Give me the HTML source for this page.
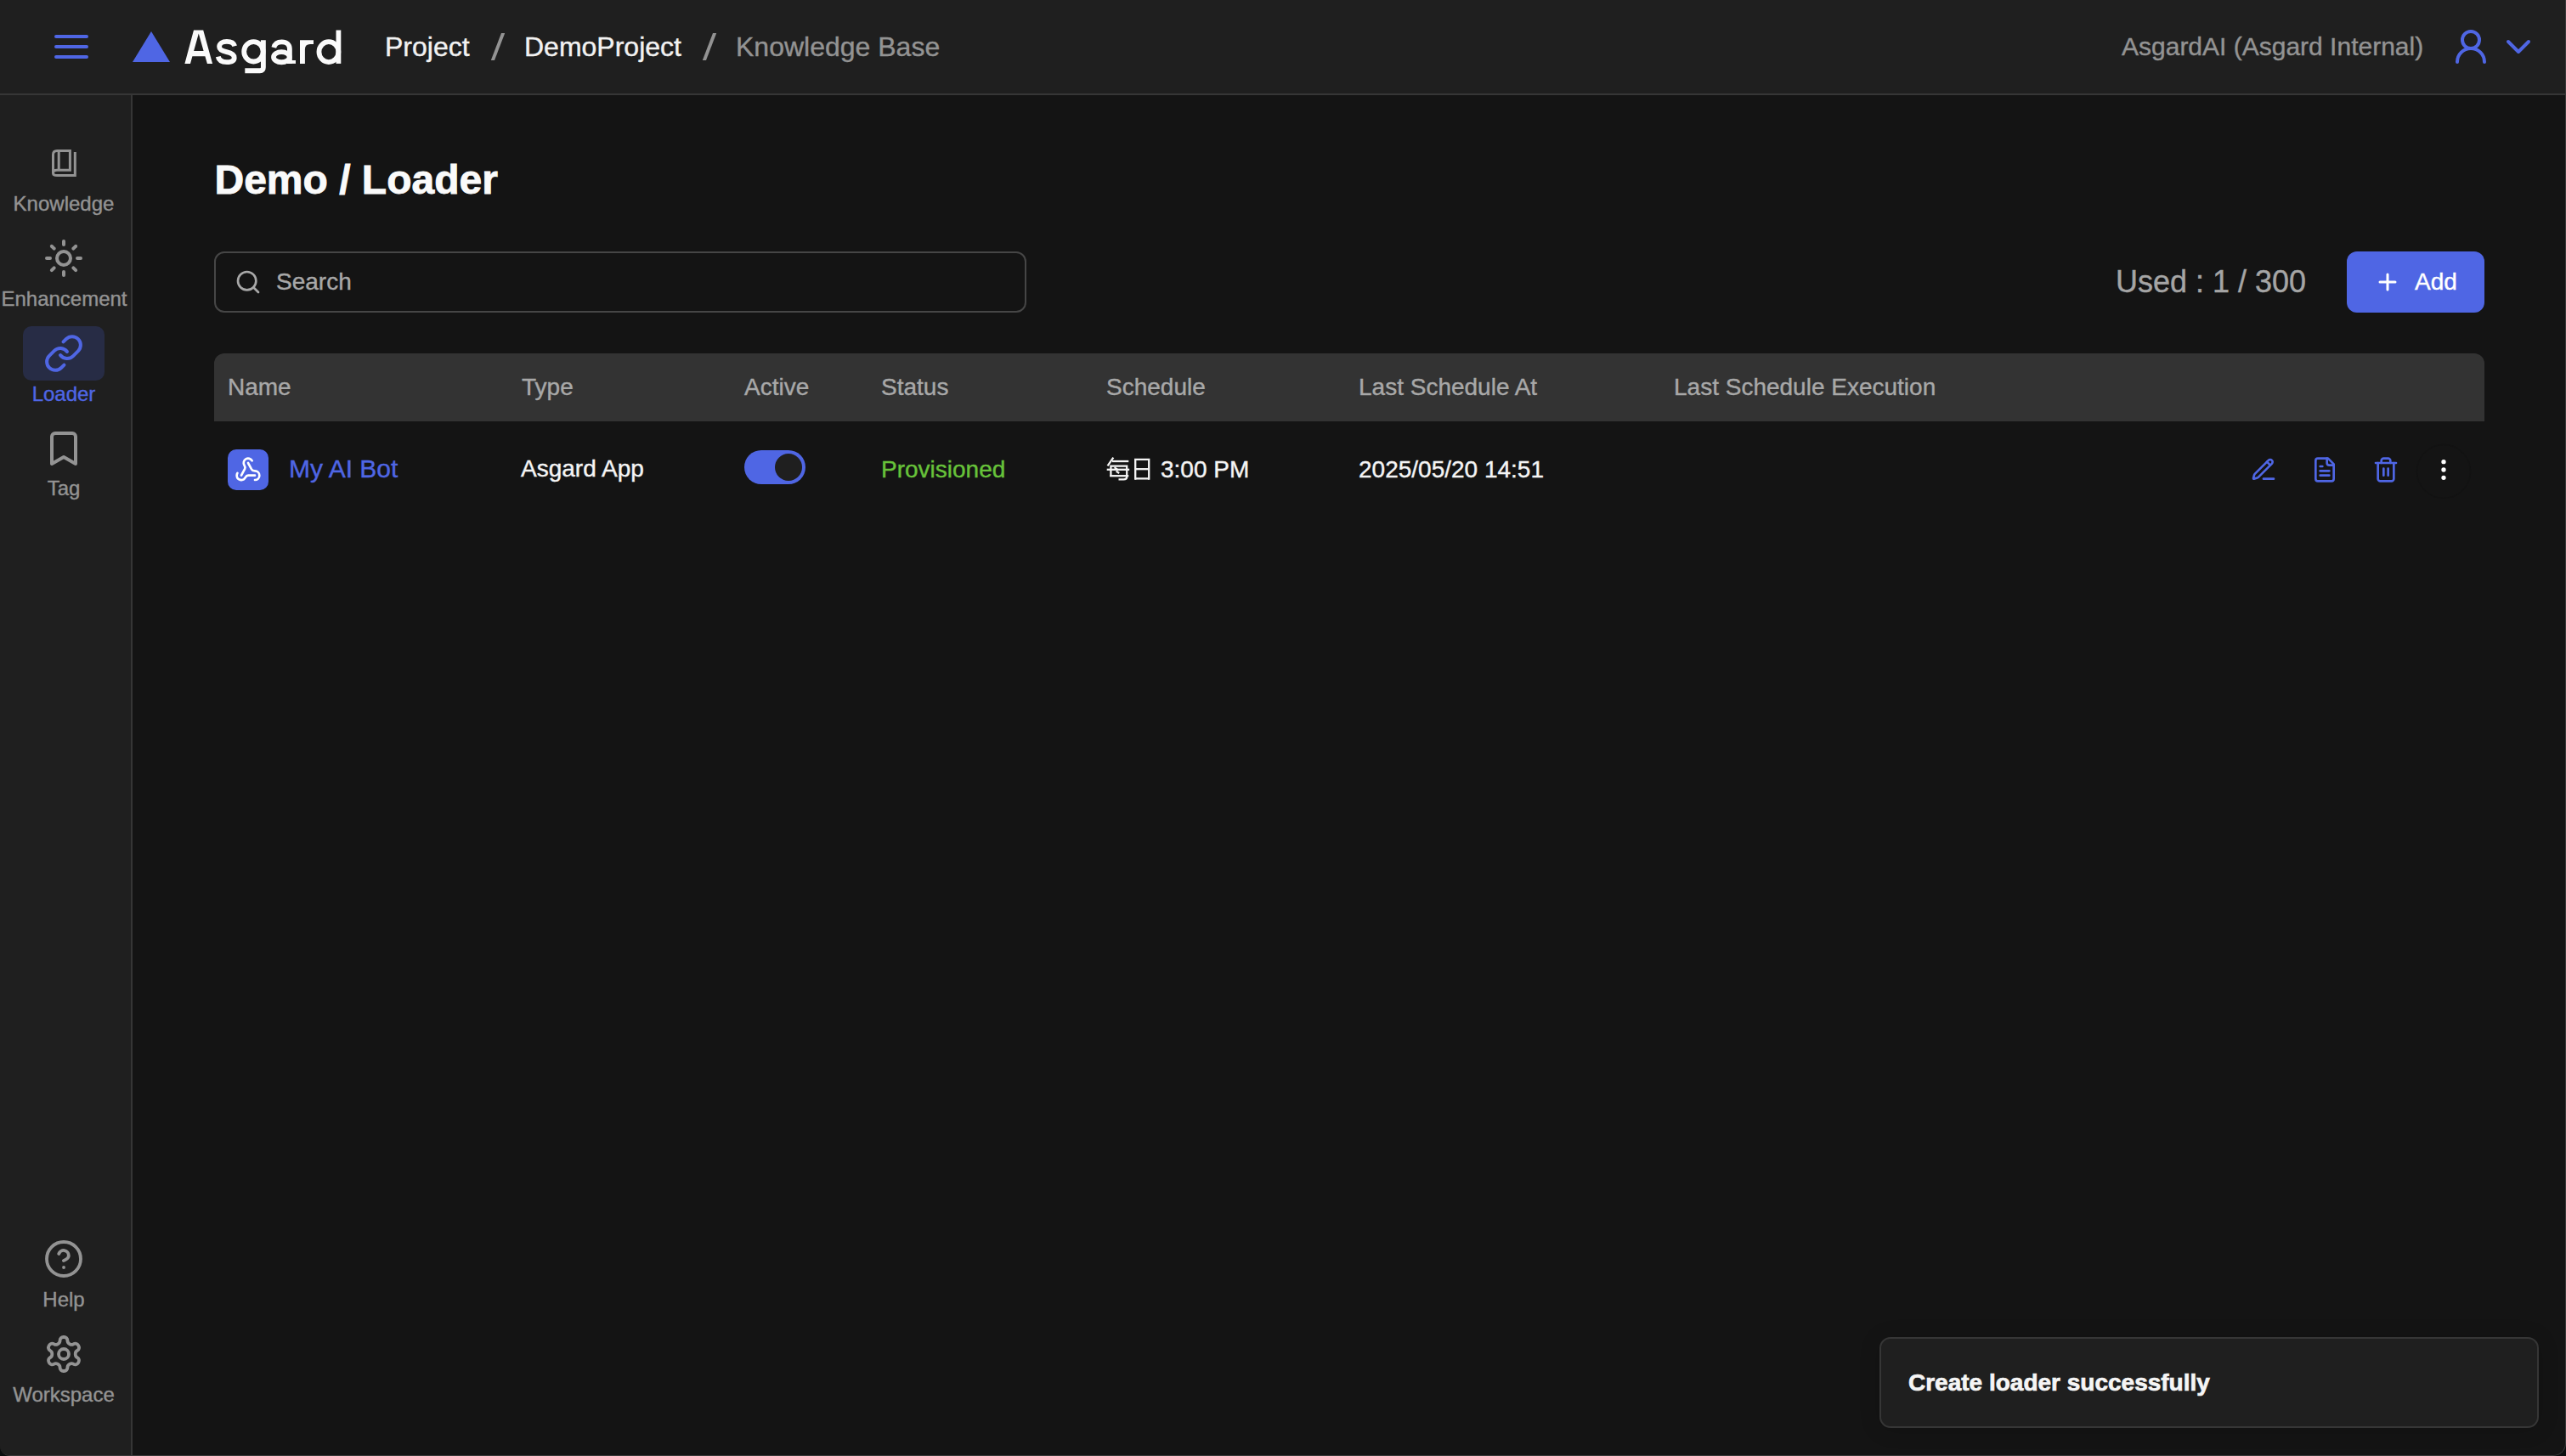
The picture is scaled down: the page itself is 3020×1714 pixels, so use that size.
<!DOCTYPE html>
<html>
<head>
<meta charset="utf-8">
<style>
html,body{margin:0;padding:0;width:3020px;height:1714px;overflow:hidden;background:#0b0e0f;}
body{font-family:"Liberation Sans",sans-serif;}
#win{position:absolute;left:0;top:0;width:3020px;height:1714px;box-sizing:border-box;background:#141414;overflow:hidden;border-right:1px solid #393939;border-bottom:1px solid #393939;border-bottom-right-radius:15px;border-bottom-left-radius:12px;}
.t{position:absolute;white-space:nowrap;-webkit-text-stroke:0.4px currentColor;}
#hdr{position:absolute;left:0;top:0;width:3019px;height:110px;background:#1f1f1f;border-bottom:2px solid #363636;}
#side{position:absolute;left:0;top:112px;width:154px;height:1602px;background:#1f1f1f;border-right:2px solid #363636;}
svg{position:absolute;overflow:visible;}
.ic{fill:none;stroke-linecap:round;stroke-linejoin:round;}
.grey{color:#939393;}
</style>
</head>
<body>
<div id="win">
  <div id="hdr">
    <!-- hamburger -->
    <svg style="left:0;top:0" width="200" height="110">
      <g stroke="#4f66e4" stroke-width="4" stroke-linecap="round">
        <line x1="66" y1="43" x2="102" y2="43"/>
        <line x1="66" y1="55" x2="102" y2="55"/>
        <line x1="66" y1="67" x2="102" y2="67"/>
      </g>
      <polygon points="156,73 178,37 200,73" fill="#4f66e4"/>
    </svg>
    <svg style="left:0;top:0" width="1" height="1">
      <path fill="#fafafa" fill-rule="evenodd" d="M217.4 74.9L228 35.5H239.2L250.1 74.9H243.9L241.4 66.3H226.4L224 74.9ZM228.1 60.1H239.6L233.8 39.6Z"/>
      <g fill="none" stroke="#fafafa" stroke-width="5.8" stroke-linecap="butt">
        <path d="M276.2 54.2C275.2 50.8 271.8 48.9 266.9 48.9C261.6 48.9 258.1 51.4 258.1 55C258.1 58.6 261.2 59.9 266.6 61.1C272.6 62.4 275.7 64.2 275.7 67.9C275.7 71.4 272.1 73.1 266.8 73.1C261.4 73.1 257.6 70.7 256.8 66.6"/>
        <ellipse cx="298.4" cy="60.85" rx="11.2" ry="11.65"/>
        <path d="M309.9 47.2V79.3Q309.9 83.25 305.9 83.25H288.3"/>
        <path d="M322.3 56C323.4 51.3 326.9 49.3 331.6 49.3C337.6 49.3 340.9 52.6 340.9 57.6V74.9"/>
        <ellipse cx="331.3" cy="67.2" rx="9.3" ry="6.05"/>
        
        <ellipse cx="386.9" cy="61.1" rx="11.45" ry="11.95"/>
        <path d="M398.4 35.5V74.9"/>
      </g>
      <rect x="341" y="71" width="7" height="3.9" fill="#fafafa"/><path fill="#fafafa" d="M353 74.9V47.2H369V51.9H365Q358.9 51.9 358.9 58V74.9Z"/>
    </svg>
    <div class="t" style="left:453px;top:39px;font-size:32px;line-height:32px;color:#f2f2f2;">Project</div>
    <svg style="left:0;top:0" width="1" height="1"><polygon points="590,39 594.2,39 582,71 577.8,71" fill="#939393"/><polygon points="839,39 843.2,39 831,71 826.8,71" fill="#939393"/></svg>
    <div class="t" style="left:617px;top:39px;font-size:32px;line-height:32px;color:#f2f2f2;">DemoProject</div>
        <div class="t" style="left:866px;top:39px;font-size:32px;line-height:32px;color:#939393;">Knowledge Base</div>
    <div class="t" style="left:2497px;top:40px;font-size:30px;line-height:30px;color:#939393;">AsgardAI (Asgard Internal)</div>
    <!-- user-round -->
    <svg style="left:2884px;top:31px" width="48" height="48" viewBox="0 0 24 24" class="ic" stroke="#4f66e4" stroke-width="2">
      <circle cx="12" cy="8" r="5"/><path d="M20 21a8 8 0 0 0-16 0"/>
    </svg>
    <svg style="left:2940px;top:31px" width="48" height="48" viewBox="0 0 24 24" class="ic" stroke="#4f66e4" stroke-width="2">
      <path d="m6 9 6 6 6-6"/>
    </svg>
  </div>

  <div id="sidebar">
    <div id="side"></div>
    <!-- knowledge book -->
    <svg style="left:0;top:0" width="1" height="1" fill="none" stroke="#939393" stroke-width="3" stroke-linecap="butt" stroke-linejoin="miter">
      <path d="M62.5 204.5V182Q62.5 177.5 67 177.5H82.4V200.3H67Q62.5 200.3 62.5 203.4Q62.5 206.5 67 206.5H88.3V179"/>
      <path d="M69.2 179V201"/>
    </svg>
    <div class="t" style="left:0;width:150px;text-align:center;top:228px;font-size:24px;line-height:24px;color:#939393;">Knowledge</div>
    <!-- sun -->
    <svg style="left:51px;top:280px" width="48" height="48" viewBox="0 0 24 24" class="ic" stroke="#939393" stroke-width="2">
      <circle cx="12" cy="12" r="4"/><path d="M12 2v2"/><path d="M12 20v2"/><path d="m4.93 4.93 1.41 1.41"/><path d="m17.66 17.66 1.41 1.41"/><path d="M2 12h2"/><path d="M20 12h2"/><path d="m6.34 17.66-1.41 1.41"/><path d="m19.07 4.93-1.41 1.41"/>
    </svg>
    <div class="t" style="left:0;width:151px;text-align:center;top:340px;font-size:24px;line-height:24px;color:#939393;">Enhancement</div>
    <!-- loader -->
    <div style="position:absolute;left:27px;top:384px;width:96px;height:64px;border-radius:10px;background:#272c45;"></div>
    <svg style="left:51px;top:392px" width="48" height="48" viewBox="0 0 24 24" class="ic" stroke="#4f66e4" stroke-width="2">
      <path d="M10 13a5 5 0 0 0 7.54.54l3-3a5 5 0 0 0-7.07-7.07l-1.72 1.71"/><path d="M14 11a5 5 0 0 0-7.54-.54l-3 3a5 5 0 0 0 7.07 7.07l1.71-1.71"/>
    </svg>
    <div class="t" style="left:0;width:150px;text-align:center;top:452px;font-size:24px;line-height:24px;color:#4f66e4;">Loader</div>
    <!-- tag -->
    <svg style="left:51px;top:504px" width="48" height="48" viewBox="0 0 24 24" class="ic" stroke="#939393" stroke-width="2">
      <path d="m19 21-7-4-7 4V5a2 2 0 0 1 2-2h10a2 2 0 0 1 2 2v16z"/>
    </svg>
    <div class="t" style="left:0;width:150px;text-align:center;top:563px;font-size:24px;line-height:24px;color:#939393;">Tag</div>
    <!-- help -->
    <svg style="left:51px;top:1458px" width="48" height="48" viewBox="0 0 24 24" class="ic" stroke="#939393" stroke-width="1.9">
      <circle cx="12" cy="12" r="10"/><path d="M9.09 9a3 3 0 0 1 5.83 1c0 2-3 3-3 3"/><path d="M12 17h.01"/>
    </svg>
    <div class="t" style="left:0;width:150px;text-align:center;top:1518px;font-size:24px;line-height:24px;color:#939393;">Help</div>
    <!-- gear -->
    <svg style="left:51px;top:1570px" width="48" height="48" viewBox="0 0 24 24" class="ic" stroke="#939393" stroke-width="1.9">
      <path d="M12.22 2h-.44a2 2 0 0 0-2 2v.18a2 2 0 0 1-1 1.73l-.43.25a2 2 0 0 1-2 0l-.15-.08a2 2 0 0 0-2.73.73l-.22.38a2 2 0 0 0 .73 2.73l.15.1a2 2 0 0 1 1 1.72v.51a2 2 0 0 1-1 1.74l-.15.09a2 2 0 0 0-.73 2.73l.22.38a2 2 0 0 0 2.730.73l.15-.08a2 2 0 0 1 2 0l.43.25a2 2 0 0 1 1 1.73V20a2 2 0 0 0 2 2h.44a2 2 0 0 0 2-2v-.18a2 2 0 0 1 1-1.73l.43-.25a2 2 0 0 1 2 0l.15.08a2 2 0 0 0 2.73-.73l.22-.39a2 2 0 0 0-.73-2.73l-.15-.08a2 2 0 0 1-1-1.74v-.5a2 2 0 0 1 1-1.74l.15-.09a2 2 0 0 0 .73-2.73l-.22-.38a2 2 0 0 0-2.73-.73l-.15.08a2 2 0 0 1-2 0l-.43-.25a2 2 0 0 1-1-1.73V4a2 2 0 0 0-2-2z"/><circle cx="12" cy="12" r="3"/>
    </svg>
    <div class="t" style="left:0;width:150px;text-align:center;top:1630px;font-size:24px;line-height:24px;color:#939393;">Workspace</div>
  </div>

  <div id="main">
    <div class="t" style="left:252.5px;top:187.5px;font-size:48px;line-height:48px;color:#fafafa;font-weight:bold;-webkit-text-stroke:0.9px #fafafa;">Demo / Loader</div>
    <!-- search -->
    <div style="position:absolute;left:252px;top:296px;width:952px;height:68px;border:2px solid #464646;border-radius:12px;"></div>
    <svg style="left:276px;top:316px" width="32" height="32" viewBox="0 0 24 24" class="ic" stroke="#a8a8a8" stroke-width="2">
      <circle cx="11" cy="11" r="8"/><path d="m21 21-4.3-4.3"/>
    </svg>
    <div class="t" style="left:325px;top:318px;font-size:28px;line-height:28px;color:#a8a8a8;">Search</div>
    <div class="t" style="left:2490px;top:314px;font-size:36px;line-height:36px;color:#a5a5a5;">Used : 1 / 300</div>
    <!-- add -->
    <div style="position:absolute;left:2762px;top:296px;width:162px;height:72px;border-radius:12px;background:#4f66e4;"></div>
    <svg style="left:0;top:0" width="1" height="1"><g stroke="#ffffff" stroke-width="3" stroke-linecap="round"><line x1="2801" y1="332" x2="2819" y2="332"/><line x1="2810" y1="323" x2="2810" y2="341"/></g></svg>
    <div class="t" style="left:2842px;top:318px;font-size:28px;line-height:28px;color:#ffffff;">Add</div>
    <!-- table header -->
    <div style="position:absolute;left:252px;top:416px;width:2672px;height:80px;border-radius:12px 12px 0 0;background:#333333;"></div>
    <div class="t" style="left:268px;top:442px;font-size:28px;line-height:28px;color:#a8a8a8;">Name</div>
    <div class="t" style="left:614px;top:442px;font-size:28px;line-height:28px;color:#a8a8a8;">Type</div>
    <div class="t" style="left:876px;top:442px;font-size:28px;line-height:28px;color:#a8a8a8;">Active</div>
    <div class="t" style="left:1037px;top:442px;font-size:28px;line-height:28px;color:#a8a8a8;">Status</div>
    <div class="t" style="left:1302px;top:442px;font-size:28px;line-height:28px;color:#a8a8a8;">Schedule</div>
    <div class="t" style="left:1599px;top:442px;font-size:28px;line-height:28px;color:#a8a8a8;">Last Schedule At</div>
    <div class="t" style="left:1970px;top:442px;font-size:28px;line-height:28px;color:#a8a8a8;">Last Schedule Execution</div>
    <!-- row -->
    <div style="position:absolute;left:268px;top:529px;width:48px;height:48px;border-radius:10px;background:#4f66e4;"></div>
    <svg style="left:276px;top:537px" width="32" height="32" viewBox="0 0 24 24" class="ic" stroke="#ffffff" stroke-width="2">
      <path d="M18 16.98h-5.99c-1.1 0-1.95.94-2.48 1.9A4 4 0 0 1 2 17c.01-.7.2-1.4.57-2"/><path d="m6 17 3.13-5.78c.53-.97.1-2.18-.5-3.1a4 4 0 1 1 6.89-4.06"/><path d="m12 6 3.13 5.73C15.66 12.7 16.9 13 18 13a4 4 0 0 1 0 8"/>
    </svg>
    <div class="t" style="left:340px;top:537px;font-size:30px;line-height:30px;color:#4f66e4;">My AI Bot</div>
    <div class="t" style="left:613px;top:538px;font-size:28px;line-height:28px;color:#f5f5f5;">Asgard App</div>
    <div style="position:absolute;left:876px;top:530px;width:72px;height:40px;border-radius:20px;background:#4f66e4;"></div>
    <div style="position:absolute;left:912px;top:534px;width:32px;height:32px;border-radius:16px;background:#1f1f1f;"></div>
    <div class="t" style="left:1037px;top:539px;font-size:28px;line-height:28px;color:#67c23a;">Provisioned</div>
    <svg style="left:0;top:0" width="1" height="1"><g fill="none" stroke="#f5f5f5" stroke-width="2.3" stroke-linecap="butt">
      <path d="M1310.3 538.6L1303.6 548.3"/><path d="M1309 543H1328.3"/><path d="M1302.7 552.8H1329.2"/><path d="M1306.2 560.2H1328.3"/>
      <path d="M1307.4 561V548.6H1326.2V561.5Q1326.2 564.4 1322.5 564.4H1316.5"/>
      <path d="M1311.6 550.2L1316.2 553.6"/><path d="M1313.6 554.6L1317.2 557"/>
      <path d="M1336.2 564.8V540.8H1352.2V564.8"/><path d="M1336.2 552.2H1352.2"/><path d="M1336.2 563.4H1352.2"/>
    </g></svg>
    <div class="t" style="left:1366px;top:539px;font-size:28px;line-height:28px;color:#f5f5f5;">3:00 PM</div>
    <div class="t" style="left:1599px;top:539px;font-size:28px;line-height:28px;color:#f5f5f5;">2025/05/20 14:51</div>
    <!-- actions -->
    <svg style="left:2648px;top:536.7px" width="32" height="32" viewBox="0 0 24 24" class="ic" stroke="#4f66e4" stroke-width="2">
      <path d="M12 20h9"/><path d="M16.376 3.622a1 1 0 0 1 3.002 3.002L7.368 18.635a2 2 0 0 1-.855.506l-2.872.838a.5.5 0 0 1-.62-.62l.838-2.872a2 2 0 0 1 .506-.854z"/><path d="m15 5 3 3"/>
    </svg>
    <svg style="left:2720px;top:536.8px" width="32" height="32" viewBox="0 0 24 24" class="ic" stroke="#4f66e4" stroke-width="2">
      <path d="M15 2H6a2 2 0 0 0-2 2v16a2 2 0 0 0 2 2h12a2 2 0 0 0 2-2V7Z"/><path d="M14 2v4a2 2 0 0 0 2 2h4"/><path d="M10 9H8"/><path d="M16 13H8"/><path d="M16 17H8"/>
    </svg>
    <svg style="left:2792px;top:536.7px" width="32" height="32" viewBox="0 0 24 24" class="ic" stroke="#4f66e4" stroke-width="2">
      <path d="M3 6h18"/><path d="M19 6v14c0 1-1 2-2 2H7c-1 0-2-1-2-2V6"/><path d="M8 6V4c0-1 1-2 2-2h4c1 0 2 1 2 2v2"/><line x1="10" x2="10" y1="11" y2="17"/><line x1="14" x2="14" y1="11" y2="17"/>
    </svg>
    <svg style="left:0;top:0" width="1" height="1"><circle cx="2876" cy="555" r="31.5" fill="none" stroke="#121212" stroke-width="1.5"/></svg>
    <svg style="left:2860px;top:537px" width="32" height="32" viewBox="0 0 24 24" class="ic" stroke="#ffffff" stroke-width="2" fill="#ffffff">
      <circle cx="12" cy="12" r="1"/><circle cx="12" cy="5" r="1"/><circle cx="12" cy="19" r="1"/>
    </svg>
    <!-- toast -->
    <div style="position:absolute;left:2212px;top:1574px;width:772px;height:103px;border:2px solid #363636;border-radius:13px;background:#1f1f1f;box-shadow:0 2px 24px rgba(0,0,0,0.15);"></div>
    <div class="t" style="left:2246px;top:1614px;font-size:28px;line-height:28px;color:#f5f5f5;font-weight:bold;-webkit-text-stroke:0.7px #f5f5f5;">Create loader successfully</div>
  </div>
</div>
</body>
</html>
